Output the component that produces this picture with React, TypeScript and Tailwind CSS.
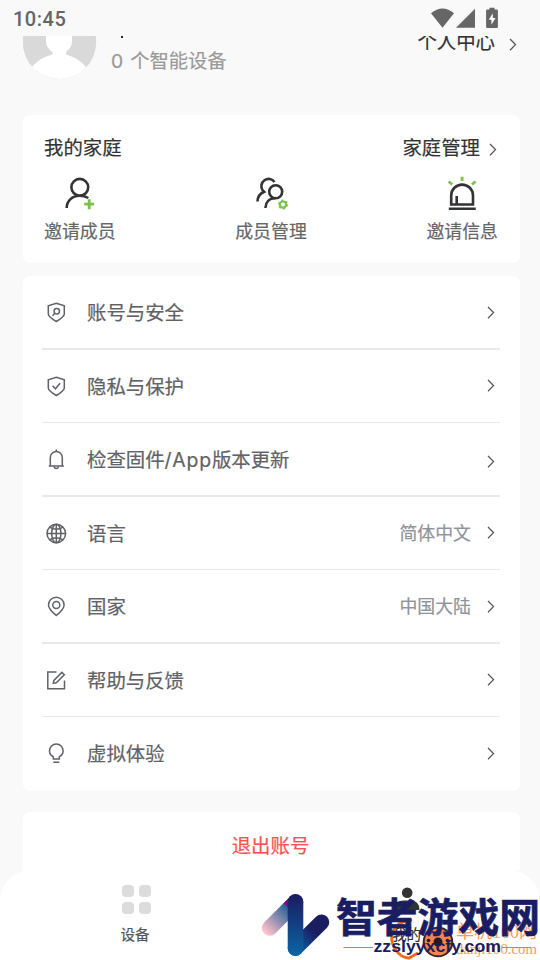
import { type ReactNode } from "react";
import clsx from "clsx";

const stroke = {
  fill: "none",
  stroke: "currentColor",
  strokeWidth: 1.5,
};

function Chevron({ className }: { className?: string }) {
  return (
    <svg viewBox="0 0 8 14" className={clsx("h-[14px] w-2 shrink-0 text-[#555]", className)} {...stroke} strokeWidth={1.3}>
      <path d="M1 2 6.5 7.6 1 13.2" />
    </svg>
  );
}

function RowIcon({ children }: { children: ReactNode }) {
  return (
    <svg viewBox="0 -0.5 22 22" className="h-[22px] w-[22px] shrink-0" {...stroke}>
      {children}
    </svg>
  );
}

const shield = "M11.3 1.7 19.3 4.3V12.5C19.3 14.5 15 17.8 11.3 20 7.6 17.8 3.3 14.5 3.3 12.5V4.3Z";

interface Row {
  label: ReactNode;
  value?: string;
  icon: ReactNode;
  chevron?: string;
}

const rows: Row[] = [
  {
    label: "账号与安全",
    icon: (
      <>
        <path d={shield} />
        <circle cx="11.8" cy="9.8" r="2.7" />
        <path d="M9.9 11.7 7.5 14.2" />
      </>
    ),
  },
  {
    label: "隐私与保护",
    icon: (
      <>
        <path d={shield} />
        <path d="m7.6 10.3 2.9 3 4.6-5.5" />
      </>
    ),
    chevron: "-mt-px",
  },
  {
    label: (
      <>
        检查固件<span className="font-[Inter] tracking-[0.8px]">/App</span>版本更新
      </>
    ),
    icon: (
      <>
        <path d="M5.3 17.4V9.3a6 6.3 0 0 1 12 0v8.1M3.7 17.4h15.2M11.3 1v2" />
        <path d="M9.2 18a2.1 2 0 0 0 4.2 0" />
      </>
    ),
    chevron: "mt-[3px]",
  },
  {
    label: "语言",
    value: "简体中文",
    icon: (
      <>
        <circle cx="11.3" cy="11" r="9.3" />
        <ellipse cx="11.3" cy="11" rx="4.6" ry="9.3" />
        <path d="M11.3 1.7v18.6M2 11h18.6M4.6 4.7Q11.3 9 18 4.7M4.6 17.3Q11.3 13 18 17.3" />
      </>
    ),
    chevron: "-mt-px",
  },
  {
    label: "国家",
    value: "中国大陆",
    icon: (
      <>
        <path d="M11.3 20C7.9 17.2 3.5 13.9 3.5 9.6a7.8 7.8 0 0 1 15.6 0C19.1 13.9 14.7 17.2 11.3 20Z" />
        <circle cx="11.3" cy="9.5" r="3.5" />
      </>
    ),
  },
  {
    label: "帮助与反馈",
    icon: (
      <>
        <path d="M11.5 2.6H2.8v16.6h16.7V11" />
        <path d="m8.3 13.9.6-3 8-8 2.4 2.4-8 8Z" />
      </>
    ),
    chevron: "-mt-px",
  },
  {
    label: "虚拟体验",
    icon: (
      <path d="M8.3 16.5v-2.3C5.7 12.7 4.5 11 4.5 8.4a6.8 6.8 0 0 1 13.6 0c0 2.6-1.2 4.3-3.8 5.8v2.3ZM8.3 19.8h6" />
    ),
  },
];

function StatusBar() {
  return (
    <div className="flex h-9 shrink-0 items-center pl-[13px] pr-[41px] text-[#666]">
      <span className="grow pt-0.5 font-[Roboto] text-[20px] font-medium leading-none tracking-[0.5px]">10:45</span>
      <svg viewBox="0 0 68 22" className="h-[22px] w-[68px]" fill="currentColor">
        <path d="M11.5 20.7 0 6.3Q11.5-3.3 23 6.3Z" />
        <path d="M25 20.7H44V1.7Z" />
        <path d="M58.5.7h5v1.8h2.2q1.2 0 1.2 1.2v16q0 1.2-1.2 1.2h-9.4q-1.2 0-1.2-1.2V3.7q0-1.2 1.2-1.2h2.2Z" />
        <path d="m61.8 6.3-4 6.4h2.6v5l4.2-6.7h-2.8Z" fill="#fff" />
      </svg>
    </div>
  );
}

function Header() {
  return (
    <div className="h-[79px] shrink-0 overflow-hidden">
      <div className="-mt-[31px] flex pl-[23px] pr-[22px]">
        <svg viewBox="0 0 74 74" className="h-[74px] w-[74px] shrink-0">
          <defs>
            <clipPath id="avatar">
              <circle cx="36.5" cy="37.2" r="36.7" />
            </clipPath>
          </defs>
          <g clipPath="url(#avatar)">
            <rect width="74" height="74" fill="#d9d9d9" />
            <path d="M23 20h26v16c0 5-2 7.5-6 11v2.5C52 52 58 56 64 63v12H8V63c6-7 12-11 21.5-13.5V47c-4.5-3.5-6.5-6-6.5-11Z" fill="#fff" />
          </g>
        </svg>
        <div className="ml-[14px] grow">
          <div className="ml-[10px] mt-[31px] h-[2px] w-[2px] bg-[#222]" />
          <div className="mt-2 text-[19.3px] leading-7 text-[#999]">
            <span className="mr-[7px] font-[Inter]">0</span>个智能设备
          </div>
        </div>
        <div className="mt-[22px] flex h-7 items-center text-[19.4px] text-[#333]">
          个人中心
          <Chevron className="ml-[14px] mr-px mt-1.5" />
        </div>
      </div>
    </div>
  );
}

function FamilyCard() {
  return (
    <section className="ml-[23px] mr-5 h-[148px] shrink-0 rounded-[7px] bg-white pl-[21px] pr-[22px] pt-[18px]">
      <div className="flex h-7 items-center justify-between text-[19.4px] text-[#333]">
        <span>我的家庭</span>
        <span className="flex items-center">
          家庭管理
          <Chevron className="ml-[9px] mr-px mt-1" />
        </span>
      </div>
      <div className="mt-[13px] flex justify-between text-[17.9px] leading-7 text-[#666]">
        <div className="flex flex-col items-center">
          <svg viewBox="0 0 36 36" className="h-9 w-9 text-[#333]" {...stroke} strokeWidth={2.6}>
            <circle cx="17.8" cy="13.3" r="8.4" />
            <path d="M4.7 34C4.7 26.5 10.5 21.8 17.5 21.8c3.500 0 6.200.6 8.800 2.200" />
            <path d="M27.200 25.200v10M22.200 30.200h10" stroke="#7cc24a" strokeWidth="2.800" />
          </svg>
          <span className="mt-1.5">邀请成员</span>
        </div>
        <div className="flex flex-col items-center">
          <svg viewBox="0 0 36 36" className="h-9 w-9 text-[#333]" {...stroke} strokeWidth={2.6}>
            <path d="M21.5 8A7 7 0 1 0 9.700 16.300l1.500 1.500C7 19.500 4.700 22.500 4.500 27.500" />
            <circle cx="22.7" cy="17.7" r="6.5" />
            <path d="M12.4 34c.2-5.700 3.800-9.800 9.700-9.800" />
            <circle cx="30" cy="30.6" r="3.100" stroke="#7cc24a" strokeWidth="2.200" />
            <circle cx="30" cy="30.6" r="4.300" stroke="#7cc24a" strokeWidth="1.400" strokeDasharray="2.250 2.250" />
          </svg>
          <span className="mt-1.5">成员管理</span>
        </div>
        <div className="flex flex-col items-center">
          <svg viewBox="0 0 36 36" className="h-9 w-9 text-[#333]" {...stroke} strokeWidth={2.6}>
            <path d="M7.200 30.500V21.500a10.900 10.900 0 0 1 21.800 0v9Z" />
            <path d="M12.700 22v8M4.800 34.700h27" />
            <path d="M18.100 2.700V7M4.700 7.500 8.200 10.500M31.500 7.500 28 10.500" stroke="#7cc24a" strokeWidth="2.800" />
          </svg>
          <span className="mt-1.5">邀请信息</span>
        </div>
      </div>
    </section>
  );
}

function SettingsCard() {
  return (
    <section className="ml-[23px] mr-5 mt-[13px] h-[515px] shrink-0 rounded-[7px] bg-white pl-[19px] pr-5 pt-[0.25px]">
      {rows.map((row, i) => (
        <div key={i}>
          <div className="flex h-[72px] items-center pl-[3px] pr-[5px]">
            <RowIcon>{row.icon}</RowIcon>
            <span className="ml-5 grow text-[19.4px] leading-7">{row.label}</span>
            {row.value && <span className="-mt-px mr-4 text-[17.9px] text-[#909399]">{row.value}</span>}
            <Chevron className={row.chevron} />
          </div>
          {i < rows.length - 1 && <div className="h-[1.5px] bg-[#e9e9e9]" />}
        </div>
      ))}
    </section>
  );
}

function TabBar() {
  return (
    <nav className="h-[90px] shrink-0 bg-[#f9f9f9]">
      <div className="flex h-full rounded-t-[31px] bg-white text-[14.6px] leading-5 text-[#555]">
        <div className="flex w-1/2 flex-col items-center pt-[15px]">
          <div className="grid grid-cols-2 gap-[5px] pl-[2px]">
            {[0, 1, 2, 3].map((n) => (
              <div key={n} className="h-3 w-3 rounded-[4px] bg-[#dcdcdc]" />
            ))}
          </div>
          <span className="mt-2.5">设备</span>
        </div>
        <div className="flex w-1/2 flex-col items-center pl-[3px] pt-[15px] text-[#333]">
          <svg viewBox="0 0 30 29" className="h-[29px] w-[30px]" fill="currentColor">
            <circle cx="15.2" cy="7.7" r="5.3" />
            <path d="M2.500 25q0-9.500 9-9.500h7q9 0 9 9.500Z" />
          </svg>
          <span className="mt-2.5">我的</span>
        </div>
      </div>
    </nav>
  );
}

function Watermark() {
  return (
    <svg viewBox="0 0 290 90" className="absolute bottom-0 right-0 h-[90px] w-[290px]">
      <defs>
        <linearGradient id="mid" x1="0" y1="0" x2="0" y2="1">
          <stop offset="0" stopColor="#1c1b60" />
          <stop offset="1" stopColor="#0a65a5" />
        </linearGradient>
        <linearGradient id="left" gradientUnits="userSpaceOnUse" x1="15" y1="62" x2="43" y2="34">
          <stop offset="0" stopColor="#ffc0cb" />
          <stop offset="0.9" stopColor="#185b93" />
        </linearGradient>
        <linearGradient id="right" gradientUnits="userSpaceOnUse" x1="45" y1="78" x2="63" y2="60">
          <stop offset="0" stopColor="#0a60a1" />
          <stop offset="1" stopColor="#1b1d61" />
        </linearGradient>
      </defs>

      <path d="M162 50C144 51 137 66 145 79q6 9 14 9l9-5" fill="none" stroke="#f56a12" strokeWidth="2.8" />
      <circle cx="188" cy="72" r="14.3" fill="#f9834a" stroke="#3a2428" strokeWidth="2" />
      <g fill="#231a28">
        <circle cx="188" cy="72" r="4.5" />
        <circle cx="188" cy="62.5" r="2.2" />
        <circle cx="178.5" cy="70.5" r="1.8" />
        <circle cx="197.5" cy="70.5" r="1.8" />
      </g>
      <g fill="#ff9a57" className="font-['Liberation_Serif','Noto_Sans_CJK_SC',serif]">
        <text x="206" y="68" fontSize="18" textLength="81" lengthAdjust="spacingAndGlyphs">
          单机100网
        </text>
        <text x="206" y="84" fontSize="14.5" textLength="81" lengthAdjust="spacingAndGlyphs">
          danji100.com
        </text>
      </g>

      <path d="M19.7 58 45.5 32.2" stroke="url(#left)" strokeWidth="15.6" strokeLinecap="round" />
      <path d="M33.5 33.5 39.5 27.5V38.5Z" fill="#910085" />
      <path d="M45.5 78 71.5 52.3" stroke="url(#right)" strokeWidth="15.6" strokeLinecap="round" />
      <rect x="37.7" y="24" width="15.6" height="62" rx="7.8" fill="url(#mid)" />

      <g fill="#191e63">
        <text
          x="86"
          y="61.5"
          fontSize="39.5"
          textLength="204"
          lengthAdjust="spacingAndGlyphs"
          className="font-['Noto_Sans_CJK_SC',sans-serif] font-bold"
          stroke="#191e63"
          strokeWidth="0.7"
        >
          智者游戏网
        </text>
        <text
          x="123.5"
          y="81.5"
          fontSize="16"
          textLength="127.5"
          lengthAdjust="spacingAndGlyphs"
          className="font-['Liberation_Sans',sans-serif] font-bold"
        >
          zzslyyxcfy.com
        </text>
      </g>
      <path d="M93.5 77.5H123M252 77.5H281" stroke="#6f9cc0" strokeWidth="1.2" />
    </svg>
  );
}

export default function App() {
  return (
    <div
      lang="zh-CN"
      className="relative flex h-[960px] w-[540px] flex-col overflow-hidden bg-[#f9f9f9] font-['Noto_Sans_CJK_SC',sans-serif] text-[#606266]"
    >
      <StatusBar />
      <div className="flex flex-col [-webkit-text-stroke:0.2px]">
        <Header />
        <FamilyCard />
        <SettingsCard />
        <button className="ml-[23px] mr-5 mt-[21px] h-[58px] shrink-0 rounded-t-[7px] bg-white pr-[2px] pt-2 text-[19.4px] text-[#fa5151]">
          退出账号
        </button>
        <TabBar />
      </div>
      <Watermark />
    </div>
  );
}
